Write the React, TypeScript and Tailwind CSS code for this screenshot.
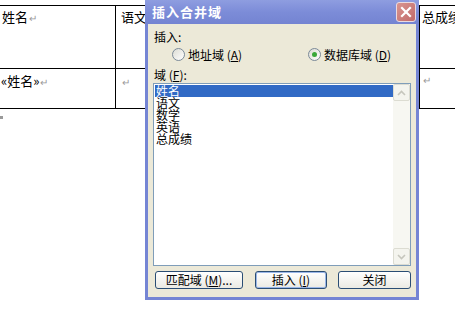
import React from 'react';

const cjk = "font-['SimSun','Noto_Sans_CJK_SC',sans-serif]";

function Ret() {
  return <span className="text-[10px] text-[#9a9a9a] ml-px">↵</span>;
}

function Radio({ checked }: { checked?: boolean }) {
  return (
    <span className="w-[13px] h-[13px] rounded-full border border-[#7b8a99] bg-gradient-to-br from-[#dcdcd4] to-white flex items-center justify-center">
      {checked && <span className="w-[5px] h-[5px] rounded-full bg-[#3aa83a]" />}
    </span>
  );
}

function Mn({ c }: { c: string }) {
  return <span className="underline underline-offset-1">{c}</span>;
}

function XpButton({ children, isDefault, width }: { children: React.ReactNode; isDefault?: boolean; width: string }) {
  return (
    <div
      className={`${width} h-[18px] rounded-[3px] border border-[#2a4d74] bg-gradient-to-b from-white to-[#ebeae3] flex items-center justify-center text-[12px] leading-none text-black ${
        isDefault ? 'shadow-[inset_0_0_0_1px_#9bb7e8]' : ''
      }`}
    >
      {children}
    </div>
  );
}

export default function App() {
  const fields = ['姓名', '语文', '数学', '英语', '总成绩'];

  return (
    <div className={`relative w-[455px] h-[319px] bg-white overflow-hidden ${cjk}`}>
      {/* document table behind */}
      <div className="pt-[5px]">
        <div className="border-t border-black">
          <div className="flex h-[63px] border-b border-black text-[13px] leading-none whitespace-nowrap">
            <div className="w-[116px] border-r border-black pl-[2px] pt-[4px]">姓名<Ret /></div>
            <div className="w-[304px] border-r border-black pl-[5px] pt-[4px]">语文<Ret /></div>
            <div className="flex-1 min-w-0 overflow-hidden pl-[2px] pt-[4px]">总成绩<Ret /></div>
          </div>
          <div className="flex h-[40px] border-b border-black text-[13px] leading-none whitespace-nowrap">
            <div className="w-[116px] border-r border-black pl-[1px] pt-[5px]">«姓名»<Ret /></div>
            <div className="w-[304px] border-r border-black pl-[5px] pt-[5px]"><Ret /></div>
            <div className="flex-1 pl-[2px] pt-[3px]"><Ret /></div>
          </div>
        </div>
        <div className="mt-[7px] w-[3px] h-[3px] bg-[#9a9a9a]" />
      </div>

      {/* dialog window */}
      <div className="absolute left-[145px] top-0 w-[274px] h-[300px] bg-[#7585d4] flex flex-col pb-[3px] px-[3px]">
        <div className="h-[24px] -mx-[3px] px-[7px] flex items-center justify-between bg-gradient-to-b from-[#8e9de0] via-[#7c8cd8] to-[#7484d2]">
          <span className="text-white font-bold text-[13px] tracking-[1px]">插入合并域</span>
          <span className="w-[20px] h-[20px] rounded-[3px] border border-[#eadbe0] bg-gradient-to-br from-[#d99590] to-[#c06a6a] flex items-center justify-center mr-[-4px]">
            <svg width="12" height="12" viewBox="0 0 12 12">
              <path d="M2 2 L10 10 M10 2 L2 10" stroke="white" strokeWidth="2.2" strokeLinecap="square" />
            </svg>
          </span>
        </div>

        <div className="flex-1 bg-[#ece9d8] pl-[5px] pr-[4px] flex flex-col text-[12px] leading-[12px] text-black">
          <div className="mt-[7px] ml-[1px]">插入:</div>
          <div className="mt-[5px] flex items-center h-[13px]">
            <div className="w-[155px] pl-[19px] flex items-center gap-[3px]">
              <Radio />
              <span>地址域 (<Mn c="A" />)</span>
            </div>
            <div className="flex items-center gap-[3px]">
              <Radio checked />
              <span>数据库域 (<Mn c="D" />)</span>
            </div>
          </div>
          <div className="mt-[8px] ml-[1px]">域 (<Mn c="F" />):</div>

          <div className="mt-[2px] w-[258px] h-[183px] border border-[#7f9db9] bg-white flex">
            <div className="flex-1 flex flex-col pl-[1px] pt-[1px]">
              {fields.map((f, i) => (
                <div
                  key={f}
                  className={`h-[12px] leading-[12px] pl-[1px] ${i === 0 ? 'bg-[#316ac5] text-white' : ''}`}
                >
                  {f}
                </div>
              ))}
            </div>
            <div className="w-[17px] bg-[#f7f7f2] flex flex-col justify-between">
              <div className="h-[17px] rounded-[2px] border border-[#dcdcd2] bg-[#f4f4ee] flex items-center justify-center">
                <svg width="9" height="6" viewBox="0 0 9 6">
                  <path d="M1 5 L4.5 1.5 L8 5" stroke="#c6c6bd" strokeWidth="1.6" fill="none" />
                </svg>
              </div>
              <div className="h-[17px] rounded-[2px] border border-[#dcdcd2] bg-[#f4f4ee] flex items-center justify-center">
                <svg width="9" height="6" viewBox="0 0 9 6">
                  <path d="M1 1 L4.5 4.5 L8 1" stroke="#c6c6bd" strokeWidth="1.6" fill="none" />
                </svg>
              </div>
            </div>
          </div>

          <div className="mt-[5px] flex items-center pl-[2px]">
            <XpButton width="w-[88px]">匹配域 (<Mn c="M" />)...</XpButton>
            <div className="ml-[12px]">
              <XpButton width="w-[72px]" isDefault>插入 (<Mn c="I" />)</XpButton>
            </div>
            <div className="ml-[11px]">
              <XpButton width="w-[73px]">关闭</XpButton>
            </div>
          </div>
        </div>
      </div>
    </div>
  );
}
